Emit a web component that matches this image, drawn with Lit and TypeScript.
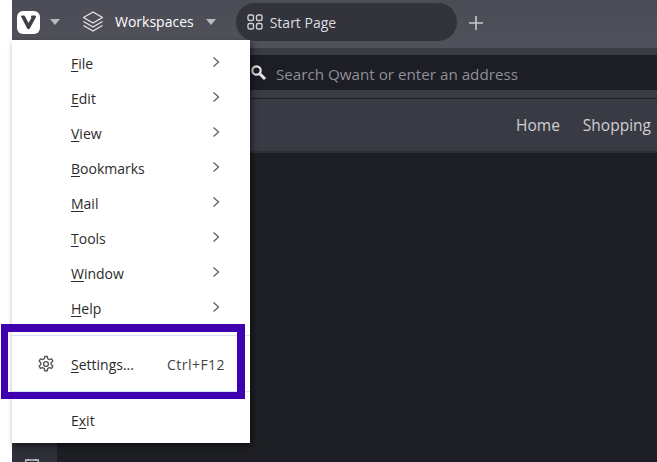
import { LitElement, html, css, svg } from "lit";
import { customElement } from "lit/decorators.js";

const items: [string, string][] = [
  ["F", "ile"], ["E", "dit"], ["V", "iew"], ["B", "ookmarks"],
  ["M", "ail"], ["T", "ools"], ["W", "indow"], ["H", "elp"],
];

const chevron = svg`<svg class="chev" width="8" height="12" viewBox="0 0 8 12"><path d="M1.500 1.500 6.500 6 1.500 10.500" fill="none" stroke="#666" stroke-width="1.400"/></svg>`;

@customElement("app-root")
export class AppRoot extends LitElement {
  static styles = css`
    :host { display: block; width: 657px; height: 462px; overflow: hidden; background: #fff; position: relative;
      font-family: "Open Sans", "Noto Sans", sans-serif; }
    .win { margin-left: 12px; height: 462px; display: flex; flex-direction: column; background: #1e1f24; }
    .top { height: 48px; flex: none; background: linear-gradient(#4b4c55, #50515a); display: flex; align-items: flex-start; padding-top: 3px; box-sizing: border-box; color: #fff; }
    .logo { margin: 8px 0 0 5px; width: 23px; height: 23px; background: #fff; border-radius: 6px; display: flex; align-items: center; justify-content: center; }
    .tri { width: 0; height: 0; border-left: 5px solid transparent; border-right: 5px solid transparent; border-top: 6px solid #b9bac0; }
    .tri.a { margin: 16px 0 0 10px; }
    .stack { margin: 7px 0 0 22px; }
    .wsname { margin: 0 0 0 11px; line-height: 38px; font-size: 14px; color: #fff; }
    .tri.b { margin: 16px 0 0 12px; }
    .tab { margin-left: 20px; width: 221px; height: 38px; border-radius: 19px; background: #32333b; display: flex; align-items: center; padding-left: 11px; box-sizing: border-box; gap: 7px; color: #dcdde0; font-size: 14px; }
    .plus { margin: 13px 0 0 12px; }
    .addr { height: 51px; flex: none; background: #3a3b44; box-sizing: border-box; padding-top: 7px; border-bottom: 1px solid #1f2026; }
    .field { height: 35px; background: #1c1d25; display: flex; align-items: center; padding-left: 238px; gap: 9px; color: #8f9097; font-size: 15.200px; }
    .field span { margin-top: 2px; }
    .nav { height: 54px; flex: none; background: #393a43; border-bottom: 2px solid #2d2e35; box-sizing: border-box; display: flex; justify-content: flex-end; align-items: center; gap: 23px; padding-right: 6px; color: #cfd0d4; font-size: 15.500px; }
    .body { flex: 1; display: flex; align-items: flex-end; }
    .side { width: 45px; height: 19px; background: #2e2f38; display: flex; justify-content: center; overflow: hidden; padding: 16px 6px 0 0; box-sizing: border-box; }
    .menu { position: absolute; left: 12px; top: 40px; width: 238px; height: 403px; background: #fff; box-shadow: 2px 3px 6px rgba(0,0,0,.55); color: #2b2b2b; font-size: 14px; }
    .row { height: 35px; display: flex; align-items: center; padding: 0 30px 0 59px; justify-content: space-between; }
    .row u { text-underline-offset: 2px; text-decoration-thickness: 1px; }
    .chev { margin-top: -3px; }
    .items { padding-top: 6px; }
    .settings { margin-top: 9px; height: 57px; padding: 2px 25px 0 59px; position: relative; border-top: 1px solid #d5e1f4; border-bottom: 1px solid #d5e1f4; box-sizing: border-box; }
    .gear { position: absolute; left: 25px; top: 19px; }
    .key { color: #444; letter-spacing: 0.45px; }
    .exit { margin-top: 11px; height: 35px; }
    .mark { position: absolute; left: 1px; top: 324px; width: 244px; height: 75px; box-sizing: border-box; border-style: solid; border-color: #3f00b0; border-width: 8px 8px 7px 7px; }
  `;

  render() {
    return html`
      <div class="win">
        <div class="top">
          <div class="logo">
            <svg width="17" height="15" viewBox="0 0 17 15"><path d="M1 1.500C1 .8 1.600.5 2.300.5h1.200c.8 0 1.200.4 1.600 1.100L8.500 8l2.600-4.600C11.600 2.600 11 2 11 1.300c0-.5.6-.8 1.200-.8h2.600c1 0 1.600.9 1.100 1.800L9.800 13.600c-.6 1-2 1-2.600 0Z" fill="#3e3f48" /></svg>
          </div>
          <div class="tri a"></div>
          <svg class="stack" width="22" height="24" viewBox="0 0 22 24" fill="none" stroke="#e8e8ea" stroke-width="1.300" stroke-linejoin="round"><path d="M11 2 20.500 7.500 11 13 1.500 7.500Z"/><path d="M1.500 11.500 11 17 20.500 11.500"/><path d="M1.500 15.500 11 21 20.500 15.500"/></svg>
          <div class="wsname">Workspaces</div>
          <div class="tri b"></div>
          <div class="tab">
            <svg width="16" height="16" viewBox="0 0 16 16" fill="none" stroke="#cfd0d4" stroke-width="1.400"><rect x="1" y="1" width="5.500" height="5.500" rx="1.500"/><rect x="9.500" y="1" width="5.500" height="5.500" rx="1.500"/><rect x="1" y="9.500" width="5.500" height="5.500" rx="1.500"/><rect x="9.500" y="9.500" width="5.500" height="5.500" rx="1.500"/></svg>
            <span>Start Page</span>
          </div>
          <svg class="plus" width="14" height="14" viewBox="0 0 14 14" stroke="#c9cace" stroke-width="1.600"><path d="M7 0V14M0 7H14"/></svg>
        </div>
        <div class="addr">
          <div class="field">
            <svg width="17" height="17" viewBox="0 0 17 17" fill="none" stroke="#e6e6e8"><circle cx="6.500" cy="6.500" r="4.200" stroke-width="2.200"/><path d="M10 10 15 15" stroke-width="3"/></svg>
            <span>Search Qwant or enter an address</span>
          </div>
        </div>
        <div class="nav"><span>Home</span><span>Shopping</span></div>
        <div class="body">
          <div class="side">
            <svg width="14" height="3" viewBox="0 0 14 3" fill="none" stroke="#c4c5ca" stroke-width="1.500"><path d="M.5 3V1H13.500V3M3 0V2M11 0V2"/></svg>
          </div>
        </div>
      </div>
      <div class="menu">
        <div class="items">
          ${items.map(([k, r]) => html`<div class="row"><span><u>${k}</u>${r}</span>${chevron}</div>`)}
        </div>
        <div class="row settings">
          <svg class="gear" width="18" height="18" viewBox="0 0 24 24" fill="none" stroke="#555" stroke-width="1.800" stroke-linejoin="round"><circle cx="12" cy="12" r="3.200"/><path d="M10.300 2h3.400l.6 3 2.200 1.200 2.900-1 1.700 3-2.300 2v2.600l2.300 2-1.700 3-2.900-1-2.200 1.200-.6 3h-3.400l-.6-3-2.200-1.200-2.900 1-1.700-3 2.300-2v-2.600l-2.300-2 1.700-3 2.900 1 2.200-1.200Z"/></svg>
          <span><u>S</u>ettings...</span><span class="key">Ctrl+F12</span>
        </div>
        <div class="row exit"><span>E<u>x</u>it</span></div>
      </div>
      <div class="mark"></div>
    `;
  }
}
